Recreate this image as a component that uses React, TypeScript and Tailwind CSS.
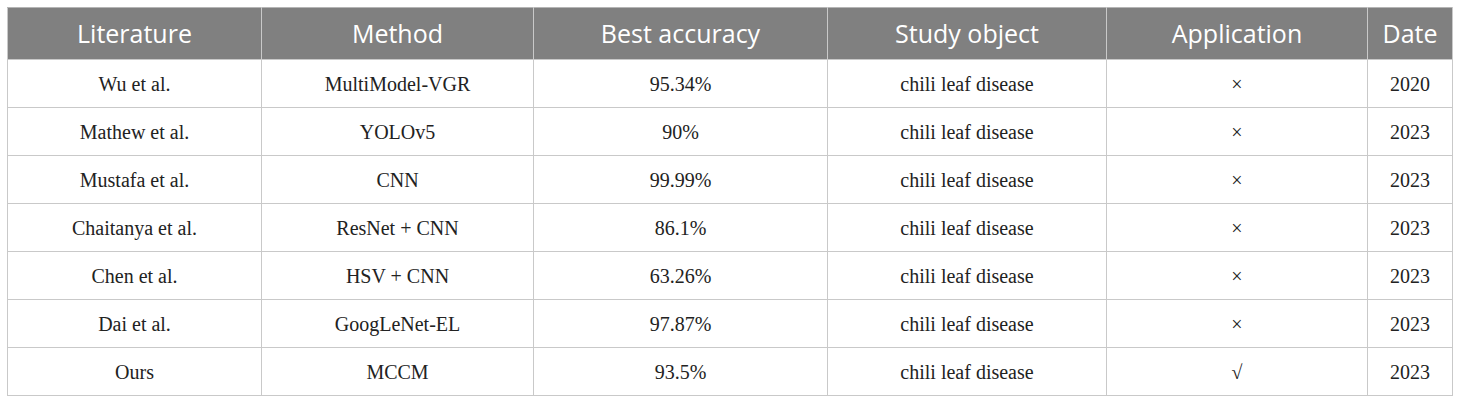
const columns = [
	{ label: "Literature", width: "w-[254px]" },
	{ label: "Method", width: "w-[272px]" },
	{ label: "Best accuracy", width: "w-[294px]" },
	{ label: "Study object", width: "w-[279px]" },
	{ label: "Application", width: "w-[261px]" },
	{ label: "Date", width: "w-[85px]" },
];

const rows = [
	["Wu et al.", "MultiModel-VGR", "95.34%", "chili leaf disease", "×", "2020"],
	["Mathew et al.", "YOLOv5", "90%", "chili leaf disease", "×", "2023"],
	["Mustafa et al.", "CNN", "99.99%", "chili leaf disease", "×", "2023"],
	["Chaitanya et al.", "ResNet + CNN", "86.1%", "chili leaf disease", "×", "2023"],
	["Chen et al.", "HSV + CNN", "63.26%", "chili leaf disease", "×", "2023"],
	["Dai et al.", "GoogLeNet-EL", "97.87%", "chili leaf disease", "×", "2023"],
	["Ours", "MCCM", "93.5%", "chili leaf disease", "√", "2023"],
];

const App = () => {
	return (
		<div className="w-[1460px] h-[405px] bg-white pt-[7px] pl-[7px]">
			<table className="table-fixed border-collapse w-[1446px]">
				<colgroup>
					{columns.map((col) => (
						<col key={col.label} className={col.width} />
					))}
				</colgroup>
				<thead>
					<tr className="h-[52px] bg-[#808080]">
						{columns.map((col) => (
							<th
								key={col.label}
								className="border border-[#c9c9c9] border-t-[#b5b5b5] text-white font-normal text-[25px] font-['Open_Sans',sans-serif] text-center"
							>
								{col.label}
							</th>
						))}
					</tr>
				</thead>
				<tbody>
					{rows.map((row) => (
						<tr key={row[0]} className="h-[48px]">
							{row.map((cell, i) => (
								<td
									key={i}
									className="border border-[#c9c9c9] text-center text-[20px] text-[#222] font-['Liberation_Serif',serif]"
								>
									{cell}
								</td>
							))}
						</tr>
					))}
				</tbody>
			</table>
		</div>
	);
};

export default App;
